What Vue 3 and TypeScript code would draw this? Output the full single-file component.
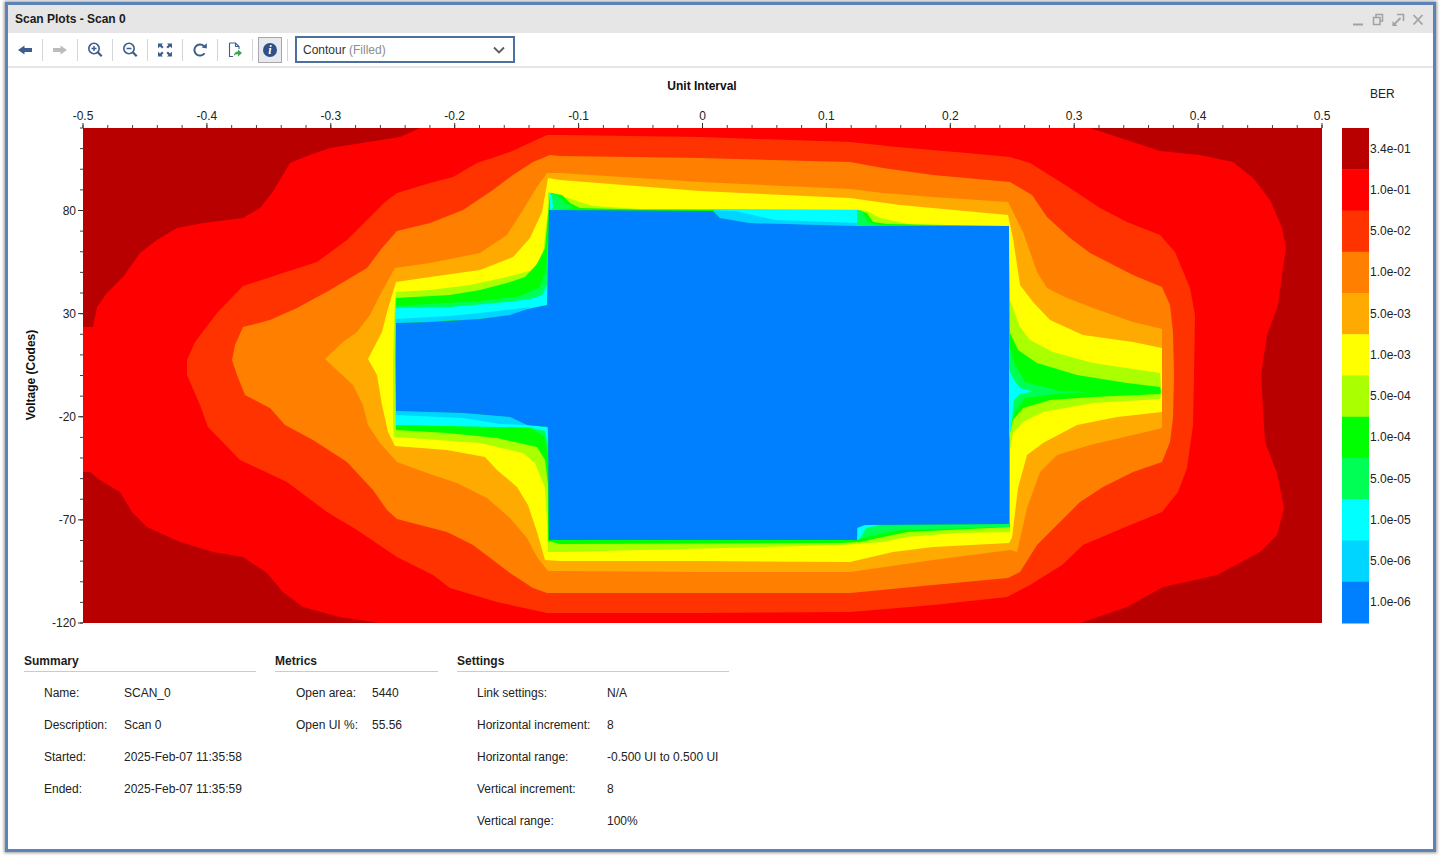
<script setup lang="ts">
interface Shape { color: string; pts: string }
const PLOT = { left: 83, right: 1322, top: 128, bottom: 623 }
const width = PLOT.right - PLOT.left
const xLabels = ['-0.5', '-0.4', '-0.3', '-0.2', '-0.1', '0', '0.1', '0.2', '0.3', '0.4', '0.5']
const xMajor = xLabels.map((text, i) => ({ text, x: PLOT.left + (width * i) / 10 }))
const xMinor = Array.from({ length: 51 }, (_, i) => PLOT.left + (width * i) / 50)
const yStep = 495 / 24
const yMinor = Array.from({ length: 25 }, (_, i) => PLOT.top + yStep * i)
const yLabels = ['80', '30', '-20', '-70', '-120'].map((text, i) => ({ text, y: PLOT.top + yStep * (4 + i * 5) }))

const shapes: Shape[] = [
  { color: '#ff0000', pts: '83,327 93,327 97,307 107,293 123,277 140,253 157,240 177,228 203,223 243,218 260,208 272,193 290,163 307,156 330,148 400,137 420,128 1090,128 1160,151 1200,155 1233,162 1253,178 1270,200 1282,228 1286,248 1282,275 1278,305 1267,335 1261,375 1265,442 1277,473 1284,508 1277,535 1260,552 1217,575 1163,587 1127,607 1080,623 380,623 340,617 303,607 283,592 267,573 243,557 213,552 180,542 147,527 132,512 120,492 100,480 90,472 83,472' },
  { color: '#ff3300', pts: '187,360 195,342 217,313 243,286 283,273 317,262 347,240 385,202 397,193 430,183 453,177 477,163 510,152 547,135 560,135 700,137 850,142 897,147 967,153 1010,157 1030,163 1070,188 1100,208 1127,222 1160,235 1175,252 1190,288 1195,315 1194,375 1193,425 1187,468 1178,492 1162,512 1123,528 1083,545 1062,565 1030,585 1007,597 933,605 850,612 700,613 560,613 547,613 497,602 450,588 433,575 397,557 357,530 327,512 287,482 240,460 208,427 200,405 187,375' },
  { color: '#ff8000', pts: '232,360 235,345 243,327 270,320 297,308 330,290 367,268 382,248 397,231 430,223 463,210 490,192 513,175 533,162 550,155 560,156 700,158 850,162 883,168 933,175 1010,182 1032,195 1047,217 1070,238 1090,253 1133,275 1162,287 1170,305 1173,332 1174,375 1173,418 1170,442 1162,462 1133,472 1103,487 1080,502 1060,522 1037,545 1020,572 1008,578 933,585 850,593 700,593 560,593 547,593 533,588 510,573 473,545 447,532 397,519 387,510 373,490 347,462 313,440 285,425 270,408 245,395 237,375' },
  { color: '#ffaa00', pts: '325,359 343,342 357,332 370,315 380,295 395,268 430,263 480,253 507,235 523,210 537,187 547,173 560,173 700,182 850,189 883,193 933,197 1008,202 1023,232 1037,272 1047,288 1067,298 1093,308 1133,322 1162,329 1162,428 1133,435 1090,445 1057,455 1040,472 1027,508 1017,552 1010,550 933,560 850,572 700,572 560,571 548,571 537,557 527,538 510,518 487,498 457,483 427,473 397,462 380,443 368,425 363,405 353,385' },
  { color: '#ffff00', pts: '368,359 382,332 387,312 396,282 430,277 480,270 513,257 530,238 542,212 548,178 560,180 700,191 850,198 900,205 1008,215 1013,238 1020,285 1033,302 1050,320 1083,335 1133,342 1162,348 1162,412 1117,417 1077,425 1043,443 1027,455 1018,488 1012,538 1009,543 933,547 893,552 850,562 700,561 560,561 545,560 537,532 528,505 517,487 497,470 485,457 447,450 395,446 388,432 382,405 377,375' },
  { color: '#aaff00', pts: '393,359 395,300 396,292 430,290 470,285 507,277 533,270 543,253 548,210 548,192 553,193 580,202 593,206 640,209 713,209 857,209.5 867,211 880,218 913,225 1008,226 1010,300 1020,327 1030,340 1053,352 1093,363 1160,373 1161,387 1162,393 1160,399 1093,403 1043,412 1023,422 1013,433 1010,450 1010,532 957,533 907,537 883,542 840,545 560,552 548,552 547,522 545,488 535,463 523,453 480,443 397,437 394,437 393,420' },
  { color: '#00ff00', pts: '395,359 396,298 450,295 480,290 507,283 525,277 537,264 545,248 548,215 550,193 562,195 570,203 580,208 640,209.5 857,210 867,213 873,222 887,224 1009,226 1010,333 1018,350 1037,363 1077,375 1127,383 1160,387 1161,392 1160,394 1093,397 1050,400 1023,408 1013,420 1010,433 1010,527 907,532 883,537 860,542 840,543 560,544 548,541 548,485 545,460 537,447 497,438 447,433 396,430' },
  { color: '#00ff55', pts: '396,306 480,301 520,296 540,287 546,270 548,240 548,306 396,325' },
  { color: '#00ff55', pts: '550,193 556,194 565,203 575,208 550,210' },
  { color: '#00ff55', pts: '857,210 862,211 868,222 880,225 857,226' },
  { color: '#00ff55', pts: '1009,345 1015,365 1025,382 1060,391 1090,392 1060,393.5 1025,398 1015,412 1009,430' },
  { color: '#00ff55', pts: '396,426 480,427 530,428 544,436 548,455 548,428' },
  { color: '#00ff55', pts: '860,528 870,526 1009,524 1009,527 900,530 870,536 858,540' },
  { color: '#00ffff', pts: '396,308 450,307 507,302 530,299 542,295 547,285 548,305 527,310 510,316 396,323' },
  { color: '#00ffff', pts: '550,193 552,196 553,208 550,210' },
  { color: '#00ffff', pts: '713,210 857,210 857,226 750,224 720,218' },
  { color: '#00ffff', pts: '1009,370 1014,380 1020,388 1033,391.5 1020,394 1014,400 1012,420 1009,440' },
  { color: '#00ffff', pts: '396,411 463,413 510,417 527,425 547,427 548,445 545,431 530,427.5 396,425' },
  { color: '#00ffff', pts: '858,527 862,525 880,525 866,528 860,538 857,540' },
  { color: '#00d5ff', pts: '396,319 450,316 490,312 515,309 530,307 510,316 480,319 396,323' },
  { color: '#00d5ff', pts: '713,210.5 735,211 775,220 857,223 857,226 750,223 720,218' },
  { color: '#00d5ff', pts: '396,411 463,413 510,417 527,425 500,424 463,418 396,415' },
  { color: '#0080ff', pts: '396,323 430,322 480,319 510,315 527,309 547,305 549,210 713,211 720,218 750,223 857,226 1009,226 1009,524 865,525 857,528 857,540 549,540 548,427 527,425 510,417 463,413 396,411' },
]

const legendColors = ['#b90000', '#ff0000', '#ff3300', '#ff8000', '#ffaa00', '#ffff00', '#aaff00', '#00ff00', '#00ff55', '#00ffff', '#00d5ff', '#0080ff']
const legendTexts = ['3.4e-01', '1.0e-01', '5.0e-02', '1.0e-02', '5.0e-03', '1.0e-03', '5.0e-04', '1.0e-04', '5.0e-05', '1.0e-05', '5.0e-06', '1.0e-06']
const legend = legendColors.map((color, i) => ({
  color,
  text: legendTexts[i],
  y: 128 + (495 * i) / 12,
  h: 495 / 12,
}))

const sections = [
  { title: 'Summary', cls: 'sec-summary', rows: [['Name:', 'SCAN_0'], ['Description:', 'Scan 0'], ['Started:', '2025-Feb-07 11:35:58'], ['Ended:', '2025-Feb-07 11:35:59']] },
  { title: 'Metrics', cls: 'sec-metrics', rows: [['Open area:', '5440'], ['Open UI %:', '55.56']] },
  { title: 'Settings', cls: 'sec-settings', rows: [['Link settings:', 'N/A'], ['Horizontal increment:', '8'], ['Horizontal range:', '-0.500 UI to 0.500 UI'], ['Vertical increment:', '8'], ['Vertical range:', '100%']] },
]
</script>

<template>
  <div class="page">
    <div class="window">
      <header class="titlebar">
        <span class="title">Scan Plots - Scan 0</span>
        <div class="win-controls">
          <svg width="20" height="16" viewBox="0 0 20 16"><path d="M5 12.5H15" stroke="#a2a2a2" stroke-width="2" /></svg>
          <svg width="20" height="16" viewBox="0 0 20 16"><path d="M8 5V2.5H14.5V9H12M5.5 5.5H12V12.5H5.5Z" fill="none" stroke="#a2a2a2" stroke-width="1.5" /></svg>
          <svg width="20" height="16" viewBox="0 0 20 16"><path d="M9 2.5H15.5V9" fill="none" stroke="#a2a2a2" stroke-width="1.6" /><path d="M5 13.5L12.5 6" stroke="#a2a2a2" stroke-width="1.8" /><path d="M4.5 9V14H9.5Z" fill="#a2a2a2" /></svg>
          <svg width="20" height="16" viewBox="0 0 20 16"><path d="M5.5 3L14.5 12.5M14.5 3L5.5 12.5" stroke="#a2a2a2" stroke-width="1.8" /></svg>
        </div>
      </header>

      <nav class="toolbar">
        <button class="tool" aria-label="Back"><svg width="16" height="16" viewBox="0 0 16 16"><path d="M1 8L7.5 3.5V6H15V10H7.5V12.5Z" fill="#3f5c8e" /></svg></button>
        <i class="sep"></i>
        <button class="tool" aria-label="Forward"><svg width="16" height="16" viewBox="0 0 16 16"><path d="M15 8L8.5 3.5V6H1V10H8.5V12.5Z" fill="#bcbcbc" /></svg></button>
        <i class="sep"></i>
        <button class="tool" aria-label="Zoom in"><svg width="16" height="16" viewBox="0 0 16 16"><circle cx="7" cy="6.5" r="5.2" fill="none" stroke="#3f5c8e" stroke-width="1.6" /><path d="M4.5 6.5H9.5M7 4V9" stroke="#3f5c8e" stroke-width="1.5" /><path d="M10.8 10.3L14.7 14.2" stroke="#3f5c8e" stroke-width="2.2" /></svg></button>
        <i class="sep"></i>
        <button class="tool" aria-label="Zoom out"><svg width="16" height="16" viewBox="0 0 16 16"><circle cx="7" cy="6.5" r="5.2" fill="none" stroke="#3f5c8e" stroke-width="1.6" /><path d="M4.5 6.5H9.5" stroke="#3f5c8e" stroke-width="1.5" /><path d="M10.8 10.3L14.7 14.2" stroke="#3f5c8e" stroke-width="2.2" /></svg></button>
        <i class="sep"></i>
        <button class="tool" aria-label="Fit"><svg width="16" height="16" viewBox="0 0 16 16"><g fill="#3f5c8e"><path d="M1 1.5H6L4.6 2.9L6.6 4.9L5 6.5L3 4.5L1 6.2Z" /><path d="M15 1.5H10L11.4 2.9L9.4 4.9L11 6.5L13 4.5L15 6.2Z" /><path d="M1 14.5H6L4.6 13.1L6.6 11.1L5 9.5L3 11.5L1 9.8Z" /><path d="M15 14.5H10L11.4 13.1L9.4 11.1L11 9.5L13 11.5L15 9.8Z" /></g></svg></button>
        <i class="sep"></i>
        <button class="tool" aria-label="Refresh"><svg width="16" height="16" viewBox="0 0 16 16"><path d="M12.6 11.2A5.6 5.6 0 1 1 11.9 4" fill="none" stroke="#3f5c8e" stroke-width="2" /><path d="M9.6 5.6L14.8 6.4L14.8 1.2Z" fill="#3f5c8e" /></svg></button>
        <i class="sep"></i>
        <button class="tool" aria-label="Export"><svg width="16" height="16" viewBox="0 0 16 16"><path d="M2.5 1H8.5L12 4.5V7M8.5 1V4.5H12M6 14.5H2.5V1" fill="none" stroke="#3f5c8e" stroke-width="1.1" /><path d="M15 11L11 7.5V9.5C8.5 9.5 7 11 6.8 14C8 12.5 9.2 12.3 11 12.3V14.5Z" fill="#3fa24f" /></svg></button>
        <i class="sep"></i>
        <div class="tool"><button class="info" aria-label="Info"><svg width="16" height="16" viewBox="0 0 16 16"><circle cx="8" cy="8" r="7" fill="#2f4f86" /><text x="8" y="12.4" class="info-i" text-anchor="middle">i</text></svg></button></div>
        <i class="sep"></i>
        <div class="select">
          <span>Contour <em>(Filled)</em></span>
          <svg width="12" height="8" viewBox="0 0 12 8"><path d="M1 1.5L6 6.5L11 1.5" fill="none" stroke="#5d5d5d" stroke-width="1.8" /></svg>
        </div>
      </nav>

      <svg class="chart" width="1425" height="565" viewBox="8 68 1425 565">
        <text x="702" y="90" class="bold" text-anchor="middle">Unit Interval</text>
        <text x="1370" y="98" class="lbl">BER</text>
        <text class="bold" text-anchor="middle" transform="translate(35 375) rotate(-90)">Voltage (Codes)</text>

        <rect :x="PLOT.left" :y="PLOT.top" :width="width" height="495" fill="#b90000" />
        <polygon v-for="(s, i) in shapes" :key="i" :points="s.pts" :fill="s.color" />

        <path v-for="x in xMinor" :key="'tx' + x" :d="`M${x} 128V125`" stroke="#444" stroke-width="1" />
        <path v-for="t in xMajor" :key="'mx' + t.x" :d="`M${t.x} 128V123`" stroke="#333" stroke-width="1" />
        <text v-for="t in xMajor" :key="'lx' + t.x" :x="t.x" y="120" class="lbl" text-anchor="middle">{{ t.text }}</text>

        <path v-for="y in yMinor" :key="'ty' + y" :d="`M83 ${y}H80`" stroke="#444" stroke-width="1" />
        <path v-for="t in yLabels" :key="'my' + t.y" :d="`M83 ${t.y}H78`" stroke="#333" stroke-width="1" />
        <text v-for="t in yLabels" :key="'ly' + t.y" x="76" :y="t.y + 4" class="lbl" text-anchor="end">{{ t.text }}</text>

        <g v-for="l in legend" :key="l.text">
          <rect x="1342" :y="l.y" width="27" :height="l.h + 0.5" :fill="l.color" />
          <text x="1370" :y="l.y + l.h / 2 + 4" class="lbl">{{ l.text }}</text>
        </g>
      </svg>

      <section class="details">
        <div v-for="sec in sections" :key="sec.title" class="sec" :class="sec.cls">
          <h3>{{ sec.title }}</h3>
          <dl>
            <template v-for="row in sec.rows" :key="row[0]">
              <dt>{{ row[0] }}</dt>
              <dd>{{ row[1] }}</dd>
            </template>
          </dl>
        </div>
      </section>
    </div>
  </div>
</template>

<style>
html, body { margin: 0; background: #fff; overflow: hidden; }
</style>

<style scoped>
.page {
  width: 1440px;
  height: 860px;
  box-sizing: border-box;
  padding: 2px 4px 8px 5px;
  background: #fff;
  font-family: "Liberation Sans", Arial, sans-serif;
  font-size: 12px;
  color: #222;
}
.window {
  height: 100%;
  box-sizing: border-box;
  border: 3px solid #5b83b6;
  box-shadow: 0 0 3px 1px #9a9a9a;
  background: #fff;
  display: flex;
  flex-direction: column;
}
.titlebar {
  height: 28px;
  flex: none;
  background: #e6e6e6;
  display: flex;
  align-items: center;
  justify-content: space-between;
  padding: 0 5px 0 7px;
}
.title { font-weight: 700; color: #1c1c1c; }
.win-controls { display: flex; margin-top: 1px; }
.toolbar {
  height: 33px;
  flex: none;
  box-sizing: content-box;
  border-bottom: 2px solid #e6e6e6;
  display: flex;
  align-items: center;
}
.tool {
  width: 34px;
  height: 33px;
  padding: 0;
  border: 0;
  background: none;
  display: flex;
  align-items: center;
  justify-content: center;
}
.sep { width: 1px; height: 22px; background: #d6d6d6; flex: none; }
.info {
  width: 24px;
  height: 26px;
  padding: 0;
  box-sizing: border-box;
  border: 1px solid #a8a8a8;
  background: #e7e9ee;
  display: flex;
  align-items: center;
  justify-content: center;
}
.info-i { font: italic 700 12px "Liberation Serif", serif; fill: #fff; }
.select {
  margin-left: 7px;
  width: 220px;
  height: 27px;
  box-sizing: border-box;
  border: 2px solid #4b6f9f;
  display: flex;
  align-items: center;
  justify-content: space-between;
  padding: 0 8px 0 6px;
  color: #333;
}
.select em { font-style: normal; color: #8c8c8c; }
.chart { display: block; flex: none; }
.lbl { font: 12px "Liberation Sans", Arial, sans-serif; fill: #222; }
.bold { font: 700 12px "Liberation Sans", Arial, sans-serif; fill: #111; }
.details {
  margin-top: 20px;
  padding-left: 16px;
  display: flex;
  gap: 19px;
}
.sec-summary { width: 232px; }
.sec-metrics { width: 163px; }
.sec-settings { width: 272px; }
h3 {
  margin: 0;
  font-size: 12px;
  font-weight: 700;
  line-height: 16px;
  padding-bottom: 2px;
  border-bottom: 1px solid #c9cbd2;
  color: #1c1c1c;
}
dl {
  margin: 5px 0 0;
  padding-left: 20px;
  display: grid;
  grid-auto-rows: 32px;
  align-items: center;
}
.sec-summary dl { grid-template-columns: 80px 1fr; }
.sec-metrics dl { padding-left: 21px; grid-template-columns: 76px 1fr; }
.sec-settings dl { grid-template-columns: 130px 1fr; }
dt, dd { margin: 0; white-space: nowrap; }
</style>
